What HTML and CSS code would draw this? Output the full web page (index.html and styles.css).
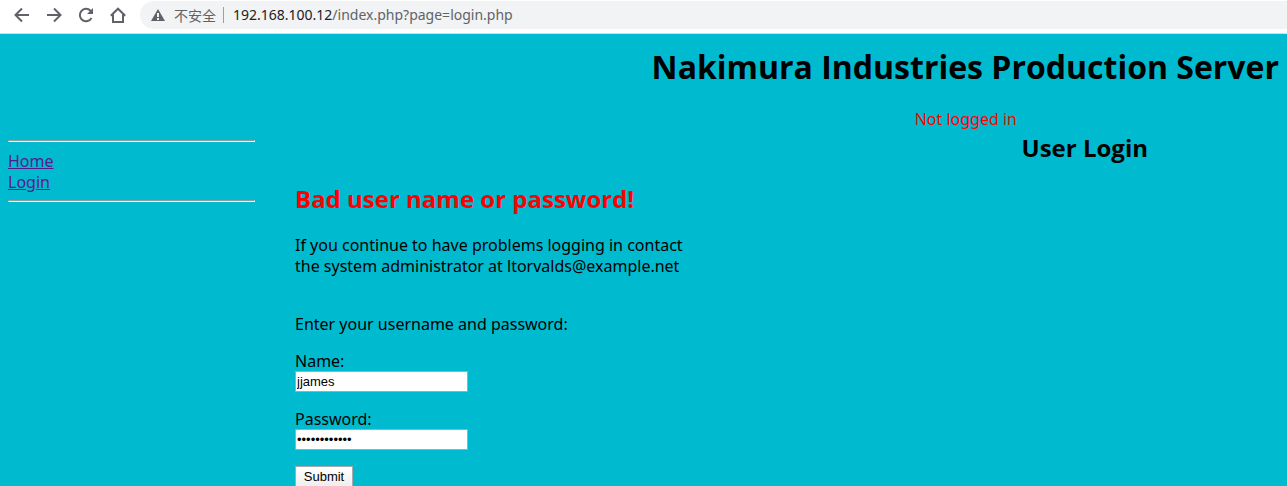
FILE: index.html
```html
<!DOCTYPE html>
<html lang="en">
<head>
<meta charset="utf-8">
<title>Nakimura Industries Production Server</title>
<link rel="stylesheet" href="styles.css">
</head>
<body>
<div class="toolbar">
  <button class="tool" aria-label="Back"><svg viewBox="0 0 16 16"><path d="M15 8H2M8 1.500L1.500 8L8 14.500"/></svg></button>
  <button class="tool" aria-label="Forward"><svg viewBox="0 0 16 16"><path d="M1 8H14M8 1.500L14.500 8L8 14.500"/></svg></button>
  <button class="tool" aria-label="Reload"><svg viewBox="0 0 16 16"><path d="M13.500 11A6.200 6.200 0 1 1 12.500 3.700L14 5.300"/><path class="solid" d="M15 1V7H9Z"/></svg></button>
  <button class="tool" aria-label="Home"><svg viewBox="0 0 16 16"><path d="M.8 8.700L8 1.700L15.200 8.700M3 7.500V15H13V7.500"/></svg></button>
  <div class="address">
    <svg class="warning" viewBox="0 0 16 14"><path d="M8 1L15 13H1Z"/><path class="mark" d="M7 5H9V9H7ZM7 10H9V12H7Z"/></svg>
    <span class="security" lang="zh">不安全</span>
    <span class="url"><span class="host">192.168.100.12</span>/index.php?page=login.php</span>
  </div>
</div>
<div class="page">
  <h1 class="title">Nakimura Industries Production Server</h1>
  <p class="status">Not logged in</p>
  <div class="columns">
    <nav class="menu">
      <hr>
      <a href="#home">Home</a>
      <a href="#login">Login</a>
      <hr>
    </nav>
    <main class="content">
      <h2 class="heading">User Login</h2>
      <h2 class="error">Bad user name or password!</h2>
      <p class="help">If you continue to have problems logging in contact<br>the system administrator at ltorvalds@example.net</p>
      <form class="login">
        <p class="prompt">Enter your username and password:</p>
        <div class="field">
          <label for="name">Name:</label>
          <input id="name" type="text" value="jjames">
        </div>
        <div class="field">
          <label for="password">Password:</label>
          <input id="password" type="password" value="abcdefghijkl">
        </div>
        <button class="submit" type="submit">Submit</button>
      </form>
    </main>
  </div>
</div>
</body>
</html>
```
FILE: styles.css
```css
* { box-sizing: border-box; }
html { background: #00bbd0; overflow: hidden; }
body {
  margin: 0;
  font: 16px/21px "Noto Sans", "Open Sans", sans-serif;
  color: #000;
}
.toolbar {
  display: flex;
  align-items: center;
  gap: 16px;
  height: 34px;
  padding: 0 0 4px 14px;
  background: #fff;
  border-bottom: 1px solid #dadce0;
}
.tool {
  width: 16px;
  height: 16px;
  padding: 0;
  border: 0;
  background: none;
}
.tool svg {
  display: block;
  fill: none;
  stroke: #5f6368;
  stroke-width: 2;
}
.tool .solid { fill: #5f6368; stroke: none; }
.address {
  flex: 1;
  display: flex;
  align-items: center;
  height: 28px;
  margin-left: -2px;
  padding-left: 10px;
  border-radius: 14px 0 0 14px;
  background: #f1f3f4;
  color: #5f6368;
  font-size: 14px;
}
.warning { width: 16px; height: 14px; fill: #5f6368; }
.warning .mark { fill: #f1f3f4; }
.security {
  margin-left: 8px;
  padding-right: 7px;
  border-right: 1px solid #9aa0a6;
  font: 14px/16px "Noto Sans CJK SC", sans-serif;
}
.url { margin-left: 9px; }
.host { color: #202124; }
.page { padding: 0 8px; }
.title {
  margin: 11px 0 20px;
  font-family: "Open Sans", sans-serif;
  font-size: 32px;
  line-height: 44px;
  text-align: right;
}
.status {
  margin: 0;
  padding-right: 262px;
  color: #f00;
  text-align: right;
}
.columns {
  display: grid;
  grid-template-columns: 247px 1fr;
  column-gap: 40px;
}
.menu { padding-top: 10px; }
.menu hr { margin: 0 0 9px; }
.menu a { display: block; width: fit-content; color: #551a8b; }
.menu a + hr { margin-top: 7px; }
.heading, .error {
  font-family: "Open Sans", sans-serif;
  font-size: 24px;
  line-height: 32px;
}
.heading { margin: 2px 0 19px; padding-right: 131px; text-align: right; }
.error { margin: 0 0 20px; color: #f00; }
.help { margin: 0 0 37px; }
.prompt { margin: 0 0 16px; }
.field + .field { margin-top: 17px; }
.field label, .field input { display: block; }
.field label { height: 20px; }
.field input {
  width: 173px;
  height: 21px;
  padding: 1px;
  border: 1px solid #a9a9a9;
  background: #fff;
  color: #000;
  font: 13px "Liberation Sans", Arial, sans-serif;
}
.submit {
  display: block;
  width: 58px;
  height: 21px;
  margin-top: 16px;
  padding: 0;
  border: 1px solid #a9a9a9;
  background: linear-gradient(#fff, #eee);
  color: #000;
  font: 13px "Liberation Sans", Arial, sans-serif;
}
```
